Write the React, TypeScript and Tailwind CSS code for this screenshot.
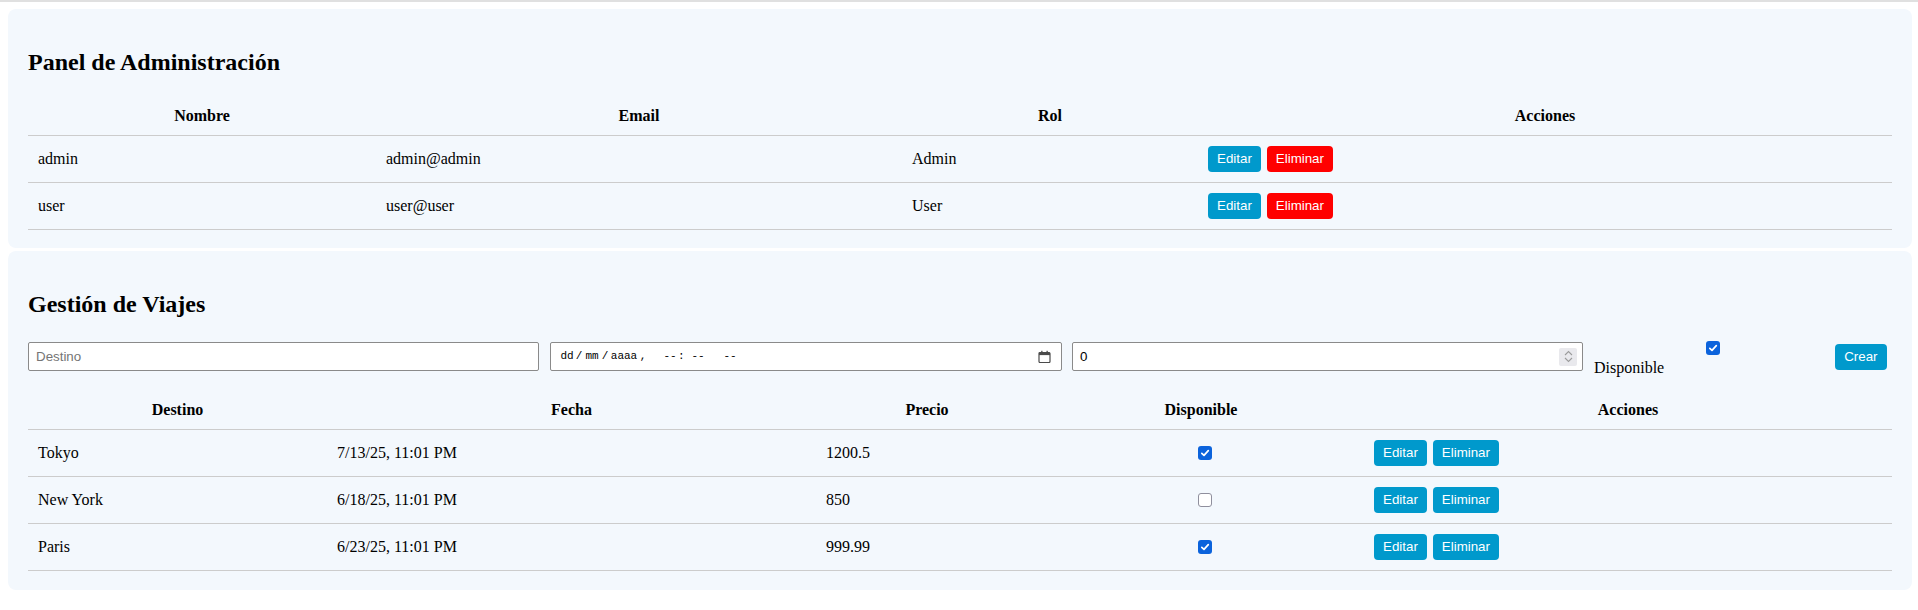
import React from 'react';

const users = [
  { nombre: 'admin', email: 'admin@admin', rol: 'Admin' },
  { nombre: 'user', email: 'user@user', rol: 'User' },
];

const viajes = [
  { destino: 'Tokyo', fecha: '7/13/25, 11:01 PM', precio: '1200.5', disponible: true },
  { destino: 'New York', fecha: '6/18/25, 11:01 PM', precio: '850', disponible: false },
  { destino: 'Paris', fecha: '6/23/25, 11:01 PM', precio: '999.99', disponible: true },
];

const Btn = ({ children, red = false }: { children: React.ReactNode; red?: boolean }) => (
  <button
    className={`h-[26px] px-[9px] rounded-[4px] text-white text-[13.33px] leading-none font-['Liberation_Sans',Arial,sans-serif] ${
      red ? 'bg-[#ff0000]' : 'bg-[#0099cc]'
    }`}
  >
    {children}
  </button>
);

const Check = ({ checked }: { checked: boolean }) =>
  checked ? (
    <span className="flex h-[14px] w-[14px] items-center justify-center rounded-[3px] bg-[#0b63dc]">
      <svg width="10" height="10" viewBox="0 0 10 10">
        <path d="M1.8 5.3 4 7.4 8.3 2.6" fill="none" stroke="white" strokeWidth="1.7" strokeLinecap="round" strokeLinejoin="round" />
      </svg>
    </span>
  ) : (
    <span className="block h-[14px] w-[14px] rounded-[3px] border border-[#8f8f9d] bg-white" />
  );

const CalendarIcon = () => (
  <svg width="13" height="13" viewBox="0 0 13 13" className="text-[#4b4b4b]">
    <rect x="1" y="2.5" width="11" height="10" rx="1" fill="none" stroke="currentColor" strokeWidth="1.2" />
    <rect x="1" y="2.5" width="11" height="2.6" fill="currentColor" />
    <rect x="3.2" y="0.8" width="1.3" height="2.4" fill="currentColor" />
    <rect x="8.5" y="0.8" width="1.3" height="2.4" fill="currentColor" />
  </svg>
);

const Panel = ({ title, children, className = '' }: { title: string; children: React.ReactNode; className?: string }) => (
  <section className={`ml-[8px] mr-[6px] rounded-[8px] bg-[#f3f8fd] px-[20px] pt-[20px] ${className}`}>
    <h2 className="mt-[20px] mb-[20px] h-[27px] text-[24px] leading-[27px] font-bold">{title}</h2>
    {children}
  </section>
);

const App = () => {
  return (
    <div className="min-h-[610px] bg-white text-black text-[16px] font-['Liberation_Serif','Times_New_Roman',serif]">
      <div className="h-[2px] bg-[#e0e0e0]" />

      <Panel title="Panel de Administración" className="mt-[7px] pb-[18px]">
        <div className="grid h-[40px] grid-cols-[348px_526px_296px_694px] items-center border-b border-[#cccccc] font-bold">
          <div className="text-center">Nombre</div>
          <div className="text-center">Email</div>
          <div className="text-center">Rol</div>
          <div className="text-center">Acciones</div>
        </div>
        {users.map((u) => (
          <div key={u.nombre} className="grid h-[47px] grid-cols-[348px_526px_296px_694px] items-center border-b border-[#cccccc]">
            <div className="px-[10px]">{u.nombre}</div>
            <div className="px-[10px]">{u.email}</div>
            <div className="px-[10px]">{u.rol}</div>
            <div className="flex gap-[6px] px-[10px]">
              <Btn>Editar</Btn>
              <Btn red>Eliminar</Btn>
            </div>
          </div>
        ))}
      </Panel>

      <Panel title="Gestión de Viajes" className="mt-[3px] pb-[19px]">
        <div className="flex h-[52px] items-start">
          <input
            placeholder="Destino"
            className="mt-[4px] h-[29px] w-[511px] rounded-[2px] border border-[#8a8a8a] bg-white pl-[7px] text-[13.33px] font-['Liberation_Sans',Arial,sans-serif] outline-none placeholder:text-[#757575]"
          />
          <div className="ml-[11px] mt-[4px] flex h-[29px] w-[512px] items-center rounded-[2px] border border-[#8a8a8a] bg-white pl-[8px] pr-[10px] text-[11px] font-['Liberation_Mono',monospace]">
            <span className="w-[16px] text-center">dd</span>
            <span className="w-[8px] text-center">/</span>
            <span className="w-[18px] text-center">mm</span>
            <span className="w-[8px] text-center">/</span>
            <span className="w-[30px] text-center">aaaa</span>
            <span className="w-[8px] text-center">,</span>
            <span className="ml-[15px] w-[16px] text-center">--</span>
            <span className="w-[4px] text-center">:</span>
            <span className="w-[32px] text-center">--</span>
            <span className="w-[32px] text-center">--</span>
            <span className="ml-auto flex">
              <CalendarIcon />
            </span>
          </div>
          <div className="ml-[10px] mt-[4px] flex h-[29px] w-[511px] items-center justify-between rounded-[2px] border border-[#8a8a8a] bg-white pl-[7px] pr-[5px] text-[13.33px] font-['Liberation_Sans',Arial,sans-serif]">
            <span>0</span>
            <span className="flex h-[18px] w-[18px] flex-col items-center justify-center gap-[1px] rounded-[2px] bg-[#e9e9ed]">
              <svg width="9" height="6" viewBox="0 0 9 6">
                <path d="M1 5 4.5 1.5 8 5" fill="none" stroke="#9b9b9b" strokeWidth="1.1" />
              </svg>
              <svg width="9" height="6" viewBox="0 0 9 6">
                <path d="M1 1 4.5 4.5 8 1" fill="none" stroke="#9b9b9b" strokeWidth="1.1" />
              </svg>
            </span>
          </div>
          <label className="ml-[11px] mt-[21px] leading-[18px]">Disponible</label>
          <span className="ml-[42px] mt-[3px]">
            <Check checked />
          </span>
          <span className="ml-[115px] mt-[6px]">
            <Btn>Crear</Btn>
          </span>
        </div>

        <div className="grid h-[40px] grid-cols-[299px_489px_222px_326px_528px] items-center border-b border-[#cccccc] font-bold">
          <div className="text-center">Destino</div>
          <div className="text-center">Fecha</div>
          <div className="text-center">Precio</div>
          <div className="text-center">Disponible</div>
          <div className="text-center">Acciones</div>
        </div>
        {viajes.map((v) => (
          <div key={v.destino} className="grid h-[47px] grid-cols-[299px_489px_222px_326px_528px] items-center border-b border-[#cccccc]">
            <div className="px-[10px]">{v.destino}</div>
            <div className="px-[10px]">{v.fecha}</div>
            <div className="px-[10px]">{v.precio}</div>
            <div className="flex justify-center pl-[8px]">
              <Check checked={v.disponible} />
            </div>
            <div className="flex gap-[6px] px-[10px]">
              <Btn>Editar</Btn>
              <Btn>Eliminar</Btn>
            </div>
          </div>
        ))}
      </Panel>
    </div>
  );
};

export default App;
